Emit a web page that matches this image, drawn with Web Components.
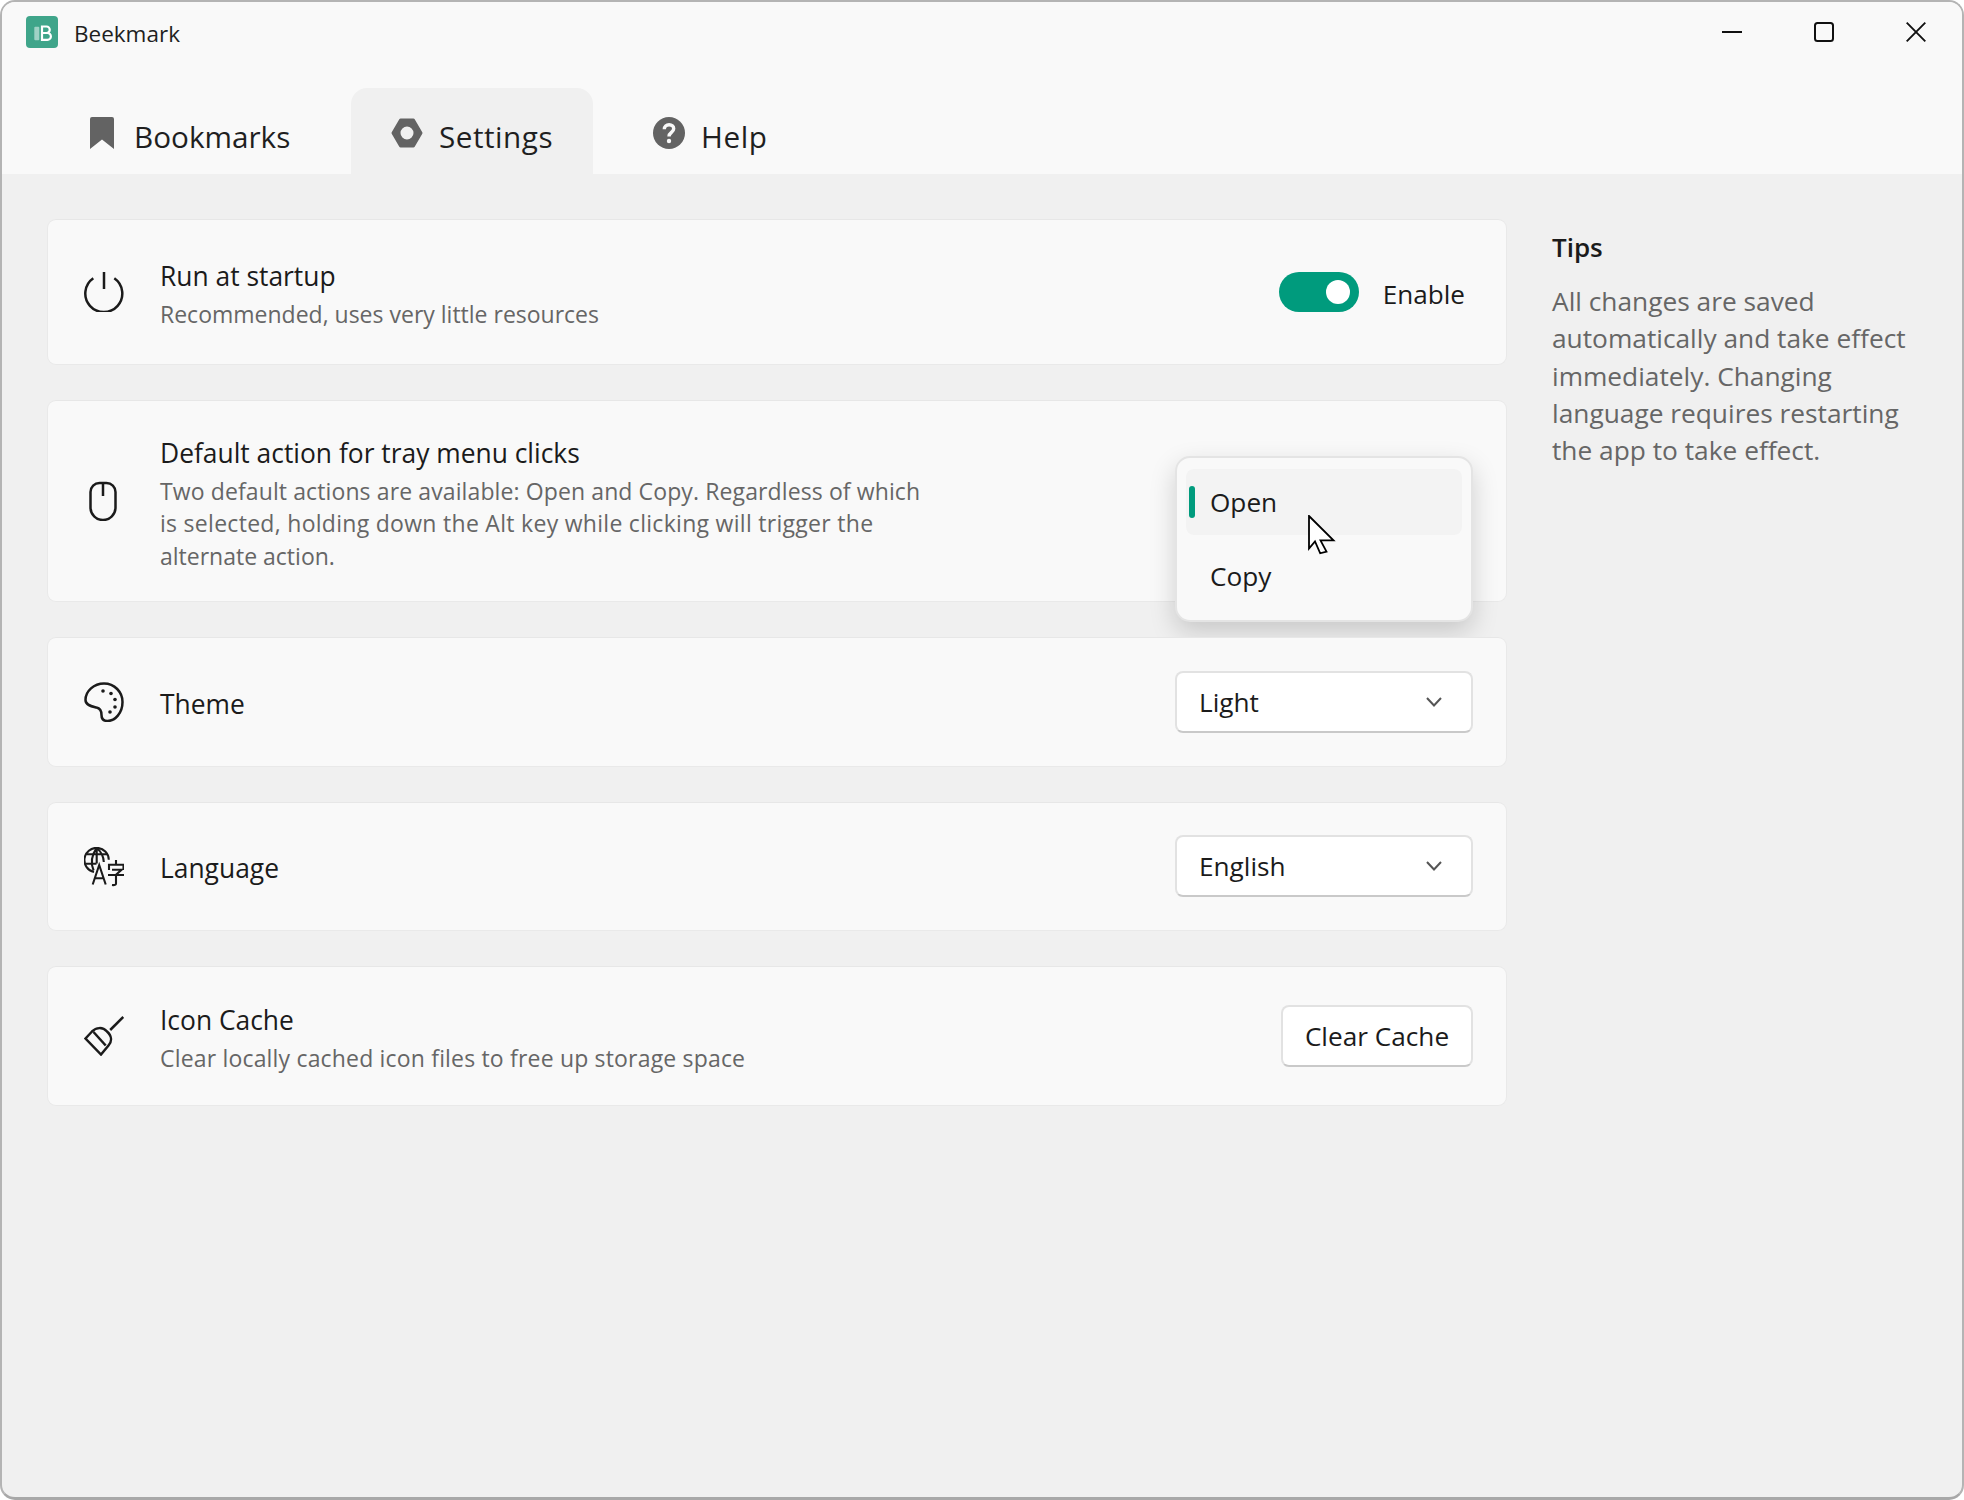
<!DOCTYPE html>
<html><head><meta charset="utf-8">
<style>
html,body{margin:0;padding:0;background:#fff}
body{width:1964px;height:1500px;overflow:hidden;font-family:"Open Sans","Noto Sans",sans-serif;color:#1b1b1b}
</style></head><body>
<app-window>
  <title-bar slot="title" name="Beekmark"></title-bar>
  <tab-bar slot="tabs">
    <tab-item style="--w:157px" label="Bookmarks" icon="bookmark"></tab-item>
    <tab-item style="--w:114px;--ls:.5px" label="Settings" icon="nut" active></tab-item>
    <tab-item style="--w:70px;--ls:.6px" label="Help" icon="help"></tab-item>
  </tab-bar>
  <setting-card style="--h:146px" icon="power" heading="Run at startup" desc="Recommended, uses very little resources" ls="0">
    <app-toggle label="Enable"></app-toggle>
  </setting-card>
  <setting-card style="--h:202px" icon="mouse" heading="Default action for tray menu clicks" desc="Two default actions are available: Open and Copy. Regardless of which|is selected, holding down the Alt key while clicking will trigger the|alternate action." ls="0.11|0.29|0">
    <select-popup></select-popup>
  </setting-card>
  <setting-card style="--h:130px" icon="palette" heading="Theme">
    <app-select value="Light"></app-select>
  </setting-card>
  <setting-card style="--h:129px" icon="lang" heading="Language">
    <app-select style="margin-top:-1px" value="English"></app-select>
  </setting-card>
  <setting-card style="--h:140px" icon="broom" heading="Icon Cache" desc="Clear locally cached icon files to free up storage space" ls="0.18">
    <app-button label="Clear Cache"></app-button>
  </setting-card>
  <tips-panel slot="side" heading="Tips">All changes are saved automatically and take effect immediately. Changing language requires restarting the app to take effect.</tips-panel>
</app-window>
<script>
const ICONS={
bookmark:`<svg width="32" height="32" viewBox="0 0 32 32"><path fill="#636363" d="M6 0h20a2 2 0 0 1 2 2v30l-12-9.5L4 32V2a2 2 0 0 1 2-2z"/></svg>`,
nut:`<svg width="32" height="32" viewBox="0 0 32 32"><path fill="#636363" fill-rule="evenodd" d="M9.6 1.5h12.8a1.5 1.5 0 0 1 1.3.8l7.6 13a1.5 1.5 0 0 1 0 1.4l-7.6 13a1.5 1.5 0 0 1-1.3.8H9.6a1.5 1.5 0 0 1-1.3-.8l-7.6-13a1.5 1.5 0 0 1 0-1.4l7.6-13a1.5 1.5 0 0 1 1.3-.8zM16 9.5a6.5 6.5 0 1 0 0 13 6.5 6.5 0 0 0 0-13z"/></svg>`,
help:`<svg width="32" height="32" viewBox="0 0 32 32"><circle cx="16" cy="16" r="16" fill="#636363"/><path fill="none" stroke="#f9f9f9" stroke-width="3.4" d="M11.3 12.3c0-2.8 2-4.5 4.8-4.5 2.7 0 4.6 1.6 4.6 4 0 3.6-4.7 3.7-4.7 7.6"/><circle cx="16" cy="24" r="2.2" fill="#f9f9f9"/></svg>`,
power:`<svg width="40" height="40" viewBox="0 0 40 40" fill="none" stroke="#1b1b1b" stroke-width="2.5"><path d="M9.3 6.3A18.5 18.5 0 1 0 30.3 6.3"/><path d="M20 0v17"/></svg>`,
mouse:`<svg width="40" height="40" viewBox="0 0 40 40" fill="none" stroke="#1b1b1b" stroke-width="2.5"><path d="M15.5 2h7a9 9 0 0 1 9 9v15.5a12.5 12.5 0 0 1-25 0V11a9 9 0 0 1 9-9z"/><path d="M19 2v13"/></svg>`,
palette:`<svg width="40" height="40" viewBox="0 0 40 40" fill="none" stroke="#1b1b1b" stroke-width="2.5"><path d="M20 1.5C30.5 1.5 38.5 10 38.5 20 38.5 31 31 39 23.5 39 19.5 39 17.5 36.5 17.5 33 17.5 30 17 26.5 12.5 25.5 8.5 24.5 1.5 23.5 1.5 18 1.5 9 10 1.5 20 1.5Z"/><g fill="#1b1b1b" stroke="none"><circle cx="19" cy="9" r="1.8"/><circle cx="27" cy="11.5" r="1.8"/><circle cx="31" cy="17.5" r="1.8"/><circle cx="31" cy="25" r="1.8"/><circle cx="26" cy="30" r="1.8"/></g></svg>`,
lang:`<svg width="40" height="40" viewBox="0 0 40 40" fill="none" stroke="#1b1b1b" stroke-width="2.1"><path d="M24.8 12.7A12.2 12.2 0 1 0 10 25"/><path d="M12.7 .8Q4.8 12 9.6 23.5M12.7 .8Q19.5 7 19.8 15M12.7 .8V16.5M2.2 7.3H23.6M1.6 16.8H12.5"/><path d="M8.7 37.5L15.2 18 21.7 37.5M10.8 31.3H19.6"/><path d="M25 23V17.8H39.5V23M32 13V17.8M28 22.8H37.5L32 27.8M24 28H40M32 27.8V36.5Q32 38.5 28 38"/></svg>`,
broom:`<svg width="40" height="40" viewBox="0 0 40 40" fill="none" stroke="#1b1b1b" stroke-width="2.5" stroke-linejoin="miter"><path d="M39.3 1L26.2 14"/><path d="M1.5 22.5L8 15.5C12 11.5 18.5 10.5 23 15.5 28 20 28 25.5 24.5 29.5L17 38.5Z"/><path d="M9.5 16L21.7 29.5"/></svg>`
};
function def(name,css,html){
  customElements.define(name,class extends HTMLElement{
    connectedCallback(){
      if(this.shadowRoot)return;
      const r=this.attachShadow({mode:'open'});
      r.innerHTML=`<style>${css}</style>`+(typeof html==='function'?html(this):html);
    }
  });
}
def('app-window',`
:host{display:flex;flex-direction:column;box-sizing:border-box;width:1964px;height:1500px;border:2px solid #b4b4b4;border-bottom:3px solid #a8a8a8;border-radius:15px;background:#f0f0f0;overflow:hidden;position:relative}
.head{background:#f9f9f9;flex:none}
.body{display:flex;flex:1;min-height:0;padding:45px 0 0 45px;align-items:flex-start}
.cards{display:flex;flex-direction:column;gap:35px;width:1460px;flex:none}
.side{flex:1;min-width:0;padding:0 37px 0 45px}
`,`<div class="head"><slot name="title"></slot><slot name="tabs"></slot></div>
<div class="body"><div class="cards"><slot></slot></div><div class="side"><slot name="side"></slot></div></div>`);
def('title-bar',`
:host{display:flex;align-items:flex-start;height:86px}
.logo{margin:14px 16px 0 24px;width:32px;height:32px;flex:none}
.name{font-size:22.5px;line-height:32px;margin-top:16px;flex:1;color:#1f1f1f}
.ctl{display:flex}
.ctl span{display:flex;align-items:center;justify-content:center;width:92px;height:60px}
svg{display:block}
`,t=>`<svg class="logo" viewBox="0 0 32 32"><rect width="32" height="32" rx="4" fill="#3fa58a"/><rect x="8.3" y="10.7" width="5" height="13.5" rx="1" fill="#fff" opacity=".5"/><path fill="none" stroke="#fff" stroke-width="2.2" d="M16 10.5h4.5a3.2 3.2 0 0 1 0 6.5H16h5.5a3.4 3.4 0 0 1 0 6.8H16z"/></svg>
<div class="name">${t.getAttribute('name')}</div>
<div class="ctl">
<span><svg width="20" height="20" viewBox="0 0 20 20"><path d="M0 10h20" stroke="#111" stroke-width="2"/></svg></span>
<span><svg width="20" height="20" viewBox="0 0 20 20"><rect x="1" y="1" width="18" height="18" rx="2.5" fill="none" stroke="#111" stroke-width="2"/></svg></span>
<span><svg width="20" height="20" viewBox="0 0 20 20"><path d="M.7.7l18.6 18.6M19.3.7L.7 19.3" stroke="#111" stroke-width="1.9"/></svg></span>
</div>`);
def('tab-bar',`:host{display:flex;gap:20px;height:86px;padding-left:44px}`,`<slot></slot>`);
def('tab-item',`
:host{display:flex;box-sizing:border-box;height:86px;padding:29px 40px 0;gap:16px;border-radius:16px 16px 0 0;align-items:flex-start}
:host([active]){background:#f0f0f0}
svg{display:block;flex:none}
.l{font-size:29.7px;line-height:40px;color:#1f1f1f;letter-spacing:var(--ls,0);width:var(--w);white-space:nowrap}
`,t=>`${ICONS[t.getAttribute('icon')]}<span class="l">${t.getAttribute('label')}</span>`);
def('setting-card',`
:host{display:flex;box-sizing:border-box;height:var(--h);align-items:center;background:#f9f9f9;border:1px solid #e9e9e9;border-top-color:#e7e7e7;border-radius:9px;padding:0 33px 0 36px;position:relative}
.ic{flex:none;width:40px;height:40px;margin-right:36px;display:block}
.ic svg{display:block}
.t{flex:1;min-width:0;padding-top:6px}
:host(:not([desc])) .t{padding-top:3px}
.h{font-size:26.4px;line-height:34px;color:#1b1b1b}
.d{font-size:23px;line-height:32.25px;color:#666;margin-top:5px}
.d span{display:block;white-space:nowrap}
.d:empty{display:none}
`,t=>{
  const ls=(t.getAttribute('ls')||'').split('|');
  const d=(t.getAttribute('desc')||'');
  const lines=d?d.split('|').map((x,i)=>`<span style="letter-spacing:${ls[i]||0}px">${x}</span>`).join(''):'';
  return `<span class="ic">${ICONS[t.getAttribute('icon')]}</span><div class="t"><div class="h">${t.getAttribute('heading')}</div><div class="d">${lines}</div></div><slot></slot>`;
});
def('app-toggle',`
:host{display:flex;align-items:center;gap:24px;padding-right:8px}
.tr{width:80px;height:40px;border-radius:20px;background:#009b7d;position:relative;flex:none}
.k{position:absolute;width:24px;height:24px;border-radius:50%;background:#fff;right:9px;top:8px}
.l{font-size:26.1px;line-height:40px;margin-top:3px;color:#1b1b1b}
`,t=>`<div class="tr"><div class="k"></div></div><span class="l">${t.getAttribute('label')}</span>`);
const BOX=`box-sizing:border-box;background:#fff;border:2px solid #e2e2e2;border-bottom-color:#c9c9c9;border-radius:8px;font-size:26.2px;color:#1b1b1b`;
def('app-select',`
:host{display:flex;align-items:center;justify-content:space-between;width:298px;height:62px;padding:0 29px 0 22px;${BOX}}
svg{display:block}
`,t=>`<span>${t.getAttribute('value')}</span><svg width="16" height="10" viewBox="0 0 16 10"><path d="M1 1l7 7.5L15 1" fill="none" stroke="#555" stroke-width="2"/></svg>`);
def('app-button',`
:host{display:flex;align-items:center;justify-content:center;width:192px;height:62px;margin-top:-1px;${BOX}}
`,t=>`<span>${t.getAttribute('label')}</span>`);
def('select-popup',`
:host{position:absolute;right:33px;top:55px;box-sizing:border-box;width:298px;height:166px;border-radius:15px;background:#f9f9f9;border:2px solid #e4e4e4;box-shadow:0 10px 26px rgba(0,0,0,.17);padding:11px 9px 0;display:flex;flex-direction:column;gap:8px;font-size:26.2px;color:#1b1b1b}
.i{height:66px;border-radius:8px;display:flex;align-items:center;padding-left:24px;position:relative;flex:none}
.i.on{background:#f3f3f3}
.i.on::before{content:"";position:absolute;left:3px;top:17px;width:6px;height:32px;border-radius:3px;background:#009b7d}
svg{position:absolute;left:131px;top:57px;display:block}
`,`<div class="i on">Open</div><div class="i">Copy</div><svg width="28" height="40" viewBox="0 0 28 40"><path d="M1 1L25.5 25.3H12.5L18.5 36.7 12.2 38.3 7 26.4 1 33.5Z" fill="#fff" stroke="#000" stroke-width="1.8"/></svg>`);
def('tips-panel',`
:host{display:block;color:#666}
.h{font-size:26px;font-weight:600;color:#1b1b1b;line-height:34px;margin-top:11px}
.b{font-size:26.3px;line-height:37.3px;margin-top:19px;color:#666}
`,t=>`<div class="h">${t.getAttribute('heading')}</div><div class="b"><slot></slot></div>`);
</script>
</body></html>
